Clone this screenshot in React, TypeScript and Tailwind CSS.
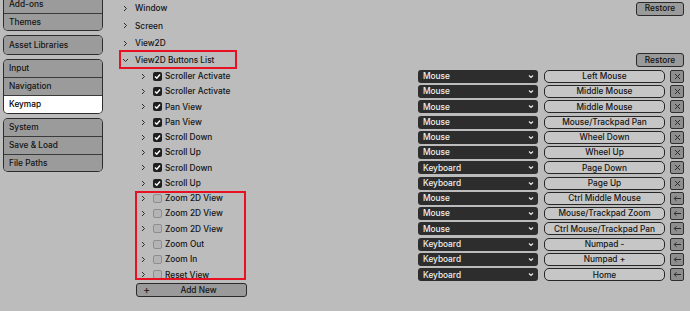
import React from 'react';

const font = { fontFamily: 'Inter, "Noto Sans", sans-serif' };

type Item = { name: string; on: boolean; dev: string; key: string };

const items: Item[] = [
  { name: 'Scroller Activate', on: true, dev: 'Mouse', key: 'Left Mouse' },
  { name: 'Scroller Activate', on: true, dev: 'Mouse', key: 'Middle Mouse' },
  { name: 'Pan View', on: true, dev: 'Mouse', key: 'Middle Mouse' },
  { name: 'Pan View', on: true, dev: 'Mouse', key: 'Mouse/Trackpad Pan' },
  { name: 'Scroll Down', on: true, dev: 'Mouse', key: 'Wheel Down' },
  { name: 'Scroll Up', on: true, dev: 'Mouse', key: 'Wheel Up' },
  { name: 'Scroll Down', on: true, dev: 'Keyboard', key: 'Page Down' },
  { name: 'Scroll Up', on: true, dev: 'Keyboard', key: 'Page Up' },
  { name: 'Zoom 2D View', on: false, dev: 'Mouse', key: 'Ctrl Middle Mouse' },
  { name: 'Zoom 2D View', on: false, dev: 'Mouse', key: 'Mouse/Trackpad Zoom' },
  { name: 'Zoom 2D View', on: false, dev: 'Mouse', key: 'Ctrl Mouse/Trackpad Pan' },
  { name: 'Zoom Out', on: false, dev: 'Keyboard', key: 'Numpad -' },
  { name: 'Zoom In', on: false, dev: 'Keyboard', key: 'Numpad +' },
  { name: 'Reset View', on: false, dev: 'Keyboard', key: 'Home' },
];

const sideGroups = [
  ['Add-ons', 'Themes'],
  ['Asset Libraries'],
  ['Input', 'Navigation', 'Keymap'],
  ['System', 'Save & Load', 'File Paths'],
];

function Chevron({ open }: { open?: boolean }) {
  return (
    <svg width="7" height="7" viewBox="0 0 7 7" className="shrink-0">
      {open ? (
        <path d="M1 2 L3.5 4.5 L6 2" fill="none" stroke="#2a2a2a" strokeWidth="1" />
      ) : (
        <path d="M2 1 L4.5 3.5 L2 6" fill="none" stroke="#2a2a2a" strokeWidth="1" />
      )}
    </svg>
  );
}

function Check({ on }: { on: boolean }) {
  if (!on)
    return <div className="w-[9px] h-[9px] shrink-0 rounded-[2px] border border-[#8e8e8e] bg-[#b4b4b4]" />;
  return (
    <div className="w-[9px] h-[9px] shrink-0 rounded-[2px] bg-[#1f1f1f] flex items-center justify-center">
      <svg width="7" height="7" viewBox="0 0 7 7">
        <path d="M1 3.6 L2.8 5.3 L6 1.5" fill="none" stroke="#ffffff" strokeWidth="1.4" />
      </svg>
    </div>
  );
}

function Restore() {
  return (
    <div className="ml-auto w-[48px] h-[14px] rounded-[3px] border border-[#2a2a2a] bg-[#9a9a9a] flex items-center justify-center text-[8.3px] font-medium text-[#111]">
      Restore
    </div>
  );
}

export default function App() {
  return (
    <div className="w-[690px] h-[311px] overflow-hidden bg-[#bcbcbc] flex text-[#141414]" style={font}>
      {/* sidebar */}
      <div className="w-[110px] shrink-0 pl-[4px] flex flex-col gap-[6px] mt-[-5px]">
        {sideGroups.map((g, gi) => (
          <div key={gi} className="w-[98px] rounded-[4px] ring-1 ring-[#2c2c2c] overflow-hidden flex flex-col">
            {g.map((s, si) => (
              <div
                key={s}
                className={
                  'h-[17.6px] flex items-center pl-[5px] text-[8.3px] font-medium ' +
                  (si > 0 ? 'border-t border-[#3a3a3a] ' : '') +
                  (s === 'Keymap' ? 'bg-white text-black' : 'bg-[#9b9b9b]')
                }
              >
                {s}
              </div>
            ))}
          </div>
        ))}
      </div>

      {/* main */}
      <div className="relative flex-1 pr-[6px] flex flex-col">
        {['Window', 'Screen', 'View2D', 'View2D Buttons List'].map((t, i) => (
          <div key={t} className={'h-[17.3px] flex items-center pl-[12px] ' + (i === 3 ? 'mt-[-0.5px]' : '')}>
            <Chevron open={i === 3} />
            <span className="ml-[6px] text-[8.3px] font-medium">{t}</span>
            {(i === 0 || i === 3) && <Restore />}
          </div>
        ))}

        {items.map((it, i) => (
          <div key={i} className="h-[15.28px] flex items-center">
            <div className="w-[308px] shrink-0 flex items-center pl-[30px]">
              <Chevron />
              <div className="ml-[6px]">
                <Check on={it.on} />
              </div>
              <span className="ml-[3px] text-[8.3px] font-medium">{it.name}</span>
            </div>
            <div className="w-[120px] h-[13px] shrink-0 rounded-[3px] bg-[#2d2d2d] flex items-center pl-[5px] pr-[4px] text-[8.3px] font-medium text-[#f0f0f0]">
              <span>{it.dev}</span>
              <svg width="6" height="5" viewBox="0 0 6 5" className="ml-auto">
                <path d="M1 1.5 L3 3.5 L5 1.5" fill="none" stroke="#e8e8e8" strokeWidth="1.2" />
              </svg>
            </div>
            <div className="ml-[6px] w-[121px] h-[13px] shrink-0 rounded-[5px] border border-[#262626] bg-[#c6c6c6] flex items-center justify-center text-[8.3px] font-medium">
              {it.key}
            </div>
            <div className="ml-[5px] w-[14px] h-[13px] shrink-0 rounded-[2px] border border-[#2f2f2f] bg-[#8e8e8e] flex items-center justify-center">
              {it.on ? (
                <svg width="7" height="7" viewBox="0 0 7 7">
                  <path d="M1 1 L6 6 M6 1 L1 6" stroke="#2c2c2c" strokeWidth="1" />
                </svg>
              ) : (
                <svg width="9" height="7" viewBox="0 0 9 7">
                  <path d="M8 3.5 L1.5 3.5 M3.5 1.2 L1.2 3.5 L3.5 5.8" fill="none" stroke="#2c2c2c" strokeWidth="1" />
                </svg>
              )}
            </div>
          </div>
        ))}

        <div className="h-[15.28px] flex items-center pl-[26px]">
          <div className="w-[111px] h-[14px] rounded-[3px] border border-[#2a2a2a] bg-[#9a9a9a] flex items-center text-[8.3px] font-medium">
            <span className="pl-[6px] w-[14px] text-[11px] leading-none font-normal">+</span>
            <span className="flex-1 text-center">Add New</span>
          </div>
        </div>

        {/* annotation boxes */}
        <div className="absolute left-[9px] top-[50px] w-[118px] h-[19px] border-2 border-[#e81123]" />
        <div className="absolute left-[25px] top-[191px] w-[111px] h-[89px] border-2 border-[#e81123]" />
      </div>
    </div>
  );
}
